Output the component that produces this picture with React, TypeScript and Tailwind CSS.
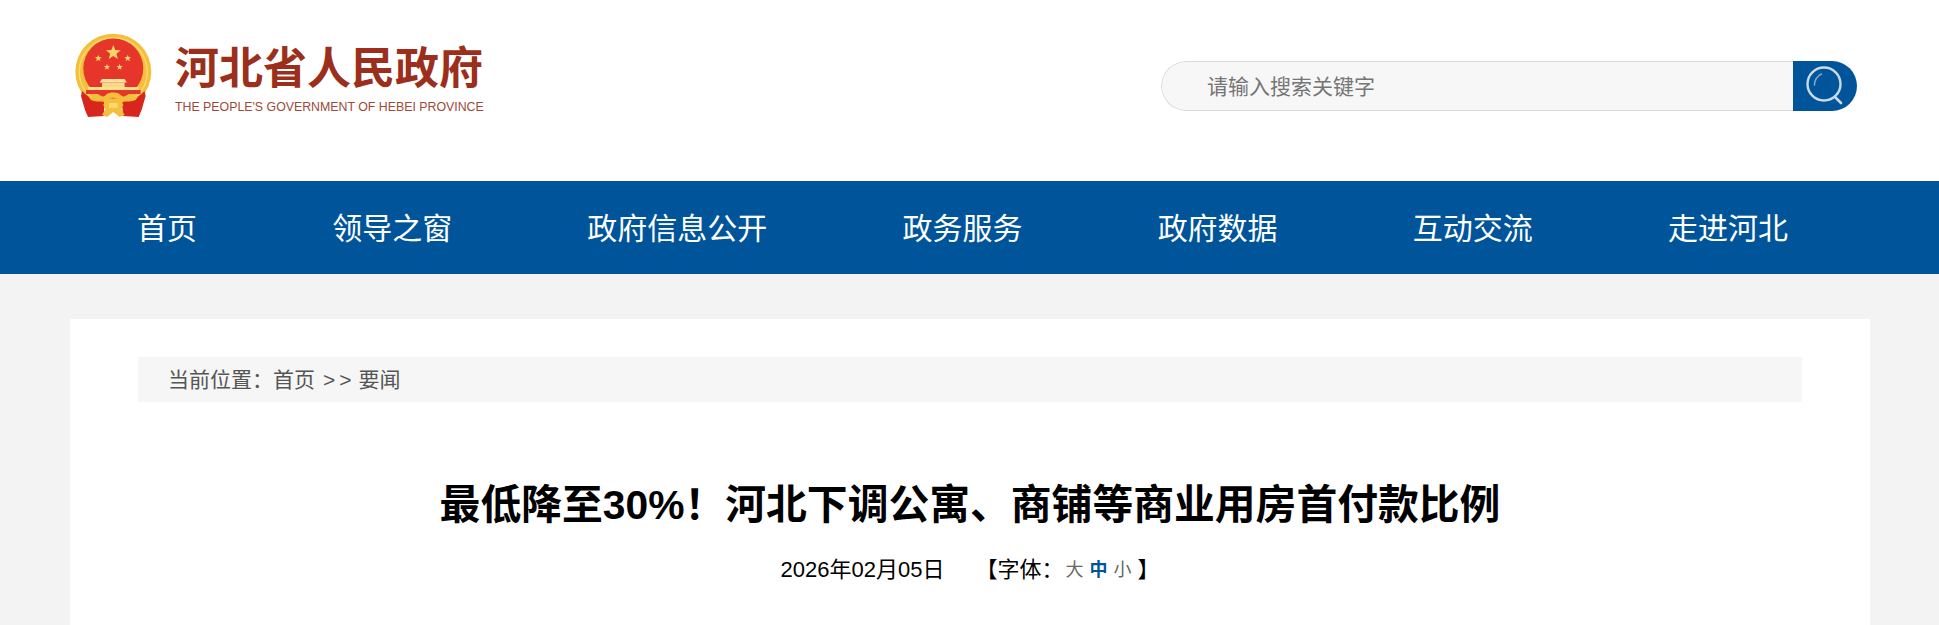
const cjk = "font-['Arial','Liberation_Sans','Noto_Sans_CJK_SC',sans-serif]";

function Star({ cx, cy, r }: { cx: number; cy: number; r: number }) {
  const pts = Array.from({ length: 10 }, (_, i) => {
    const a = -Math.PI / 2 + (i * Math.PI) / 5;
    const q = i % 2 ? r * 0.42 : r;
    return `${(cx + q * Math.cos(a)).toFixed(2)},${(cy + q * Math.sin(a)).toFixed(2)}`;
  }).join(" ");
  return <polygon points={pts} fill="#f8d468" />;
}

function Emblem() {
  return (
    <svg width="80" height="86" viewBox="0 0 80 86" className="block">
      <defs>
        <filter id="soft" x="-5%" y="-5%" width="110%" height="110%">
          <feGaussianBlur stdDeviation="0.45" />
        </filter>
      </defs>
      <g filter="url(#soft)">
        <circle cx="40.3" cy="38.7" r="38" fill="#f4bf3c" />
        <circle cx="40.3" cy="38.7" r="34" fill="none" stroke="#fbd86e" strokeWidth="1.5" />
        <circle cx="40.3" cy="35.5" r="30" fill="#e6352a" />
        <Star cx={40.3} cy={19.7} r={7.8} />
        <Star cx={25.3} cy={25.3} r={3.6} />
        <Star cx={54.7} cy={25.3} r={3.6} />
        <Star cx={34} cy={34} r={3.3} />
        <Star cx={46.6} cy={34} r={3.3} />
        <path d="M29 46h22.6l2.4 3.6H26.6z" fill="#f8e3a2" />
        <rect x="29" y="49.5" width="22.6" height="4.5" fill="#f7d987" />
        <rect x="15" y="54" width="50.6" height="3" fill="#fbe08a" />
        <rect x="13" y="57" width="54.6" height="4" fill="#e6352a" />
        <path d="M9 58c3 3 5 5 8 6l14 5v14l-16 1-3-7-4-14z" fill="#d9261c" />
        <path d="M71.6 58c-3 3-5 5-8 6l-14 5v14l16 1 3-7 4-14z" fill="#d9261c" />
        <path d="M15 63c8 3 16 2 19-2 3-2 9-2 12.600 0 3 4 11 5 19 2l-3 4c-6 2-12 2-16.600 0-3-3-9-3-12 0-5 2-11 2-16 0z" fill="#f4bf3c" />
        <path d="M30 72c3-3 7-3 10.300-1 3.300-2 7.300-2 10.300 1l-3 3 4 7-5 2-6.300-5-6.300 5-5-2 4-7z" fill="#f4bf3c" />
        <path d="M36 70h8.600v5h-8.600z" fill="#fbd86e" />
      </g>
    </svg>
  );
}

function SearchIcon() {
  return (
    <svg width="44" height="46" viewBox="0 0 44 46" className="block">
      <circle cx="20" cy="21" r="16.500" fill="none" stroke="#c9dbe8" strokeWidth="2.400" />
      <path d="M31 34l6 6" stroke="#c9dbe8" strokeWidth="2.600" strokeLinecap="round" />
      <path d="M10.500 22c0-5 3-9 7-11" fill="none" stroke="#7fa9c9" strokeWidth="1.600" strokeLinecap="round" />
    </svg>
  );
}

const navItems = ["首页", "领导之窗", "政府信息公开", "政务服务", "政府数据", "互动交流", "走进河北"];

export default function App() {
  return (
    <div className={`h-screen overflow-hidden bg-[#f3f3f3] ${cjk}`}>
      <header className="flex h-[181px] items-start justify-between bg-white pr-[82px] pl-[73px]">
        <div className="mt-[33px] flex items-start gap-[22px]">
          <Emblem />
          <div className="flex flex-col pt-[8px]">
            <div className="text-[44px] leading-[56px] font-bold text-[#9c2f1c]">河北省人民政府</div>
            <div className="mt-[1px] text-[12.35px] leading-[18px] whitespace-nowrap text-[#9c4a38]">
              THE PEOPLE'S GOVERNMENT OF HEBEI PROVINCE
            </div>
          </div>
        </div>
        <div className="mt-[61px] flex h-[50px] w-[696px] overflow-hidden rounded-full">
          <div className="flex flex-1 items-center rounded-l-full border border-r-0 border-[#d9d9d9] bg-[#f7f7f7] pt-[2px] pl-[45px] text-[21px] text-[#757575]">
            请输入搜索关键字
          </div>
          <div className="flex w-[64px] items-center justify-center bg-[#00559a] pl-[1px]">
            <SearchIcon />
          </div>
        </div>
      </header>

      <nav className="flex h-[93px] items-center justify-between bg-[#00559a] pt-[1px] pr-[151px] pl-[137px] text-[30px] text-white">
        {navItems.map((n) => (
          <span key={n}>{n}</span>
        ))}
      </nav>

      <main className="mt-[45px] ml-[70px] h-[400px] w-[1800px] bg-white px-[68px] pt-[38px]">
        <div className="flex h-[45px] items-center bg-[#f6f6f6] pl-[30px] text-[21px] text-[#555555]">
          <span>当前位置：</span>
          <span>首页</span>
          <span className="ml-[8px] tracking-[4px]">&gt;&gt;</span>
          <span className="ml-[3px]">要闻</span>
        </div>
        <h1 className="mt-[73px] text-center text-[40.8px] leading-[60px] font-bold text-black">
          最低降至30%！河北下调公寓、商铺等商业用房首付款比例
        </h1>
        <div className="mt-[19px] flex justify-center text-[22px] leading-[32px] text-black">
          <span>2026年02月05日</span>
          <span className="ml-[31px]">【字体：</span>
          <span className="ml-[2px] flex items-center gap-[6px] text-[18px]">
            <span className="text-[#666666]">大</span>
            <span className="font-bold text-[#00559a]">中</span>
            <span className="text-[#666666]">小</span>
          </span>
          <span className="ml-[6px]">】</span>
        </div>
      </main>
    </div>
  );
}
